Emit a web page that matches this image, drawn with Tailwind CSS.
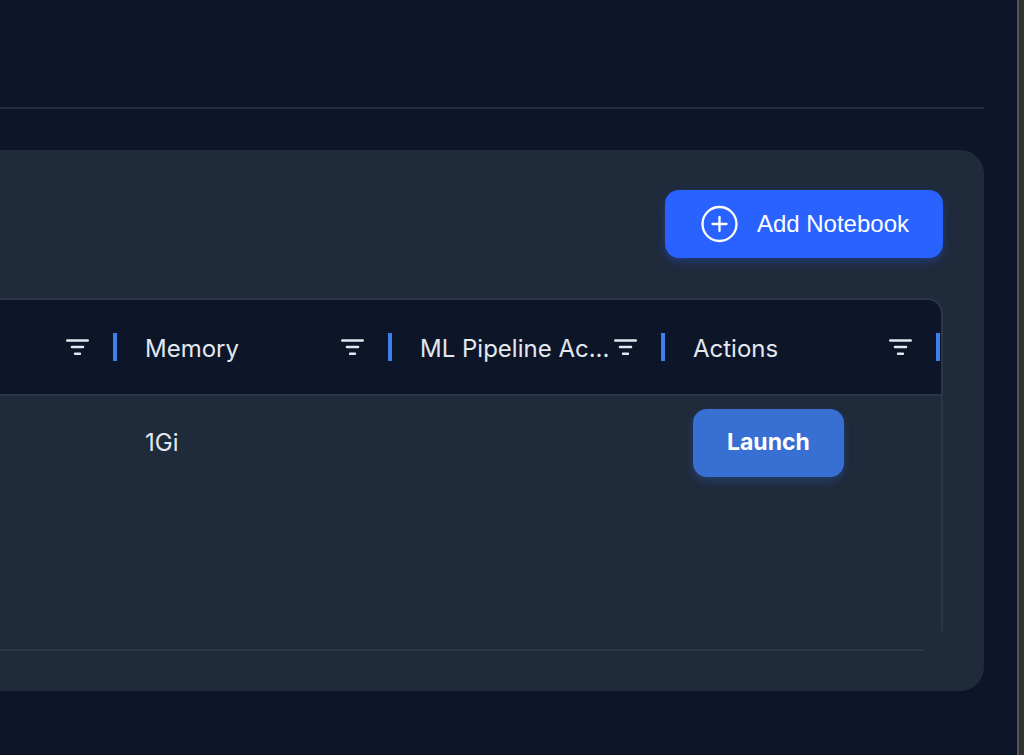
<!DOCTYPE html>
<html lang="en">
<head>
  <meta charset="UTF-8" />
  <meta name="viewport" content="width=device-width, initial-scale=1.0" />
  <title>Notebooks</title>
  <script src="https://cdn.jsdelivr.net/npm/@tailwindcss/browser@4"></script>
</head>
<body class="min-h-screen flex bg-[#333231] font-['Inter',sans-serif] text-[#e2e8f0] overflow-hidden">
  <svg class="hidden">
    <symbol id="filter" viewBox="0 0 24 20">
      <path d="M2.300 3.500h20.400M7 10h11M10.100 16.700h4.800" fill="none" stroke="currentColor" stroke-width="2.6" stroke-linecap="round" />
    </symbol>
  </svg>

  <div class="flex-1 min-w-0 min-h-screen bg-[#0d1628] border-r-2 border-[#55565a] mr-[5px] pr-[33px]">
    <header class="h-[109px] border-b-2 border-[#252f40]"></header>

    <main class="mt-[41px] bg-[#1f2a3b] rounded-r-3xl py-10 pr-[41px]">
      <div class="flex justify-end">
        <button type="button" class="flex items-center gap-[18px] h-[68px] pl-9 pr-[34px] rounded-[14px] bg-[#2962ff] text-white text-2xl font-['Liberation_Sans',sans-serif] shadow-[0_4px_8px_rgba(41,98,255,0.3)]">
          <svg class="size-[38px]" viewBox="0 0 38 38" fill="none" stroke="currentColor" stroke-width="2.3" stroke-linecap="round">
            <circle cx="18.500" cy="19" r="17" />
            <path d="M18.500 12v14M11.500 19h14" />
          </svg>
          Add Notebook
        </button>
      </div>

      <!-- Notebook grid -->
      <div class="relative mt-10">
        <div class="h-[353px] border-2 border-l-0 border-[#2b3648] rounded-tr-2xl overflow-hidden">
          <table class="w-full table-fixed text-2xl">
            <colgroup>
              <col />
              <col class="w-[275px]" />
              <col class="w-[273px]" />
              <col class="w-[276px]" />
            </colgroup>
            <thead class="bg-[#0d1628]">
              <tr class="h-[95px] border-b-2 border-[#2b3648]">
                <th scope="col">
                  <div class="flex items-center justify-end gap-6">
                    <button type="button" aria-label="Filter"><svg class="w-6 h-5"><use href="#filter" /></svg></button>
                    <span class="w-1 h-7 bg-[#4080ea]"></span>
                  </div>
                </th>
                <th scope="col" class="pl-7 font-normal">
                  <div class="flex items-center gap-6">
                    <span class="flex-1 pt-1 text-left">Memory</span>
                    <button type="button" aria-label="Filter Memory"><svg class="w-6 h-5"><use href="#filter" /></svg></button>
                    <span class="w-1 h-7 bg-[#4080ea]"></span>
                  </div>
                </th>
                <th scope="col" class="pl-7 font-normal">
                  <div class="flex items-center gap-6">
                    <span class="flex-1 pt-1 text-left whitespace-nowrap -mr-6">ML Pipeline Ac...</span>
                    <button type="button" aria-label="Filter ML Pipeline"><svg class="w-6 h-5"><use href="#filter" /></svg></button>
                    <span class="w-1 h-7 bg-[#4080ea]"></span>
                  </div>
                </th>
                <th scope="col" class="pl-7 pr-px font-normal">
                  <div class="flex items-center gap-6">
                    <span class="flex-1 pt-1 text-left">Actions</span>
                    <button type="button" aria-label="Filter Actions"><svg class="w-6 h-5"><use href="#filter" /></svg></button>
                    <span class="w-1 h-7 bg-[#4080ea]"></span>
                  </div>
                </th>
              </tr>
            </thead>
            <tbody>
              <tr class="h-[94px]">
                <td></td>
                <td class="pl-7">1Gi</td>
                <td></td>
                <td class="pl-7">
                  <button type="button" class="block h-[68px] px-[34px] rounded-[14px] bg-[#386fd2] text-white text-[23px] font-bold shadow-[0_4px_8px_rgba(56,111,210,0.3)]">Launch</button>
                </td>
              </tr>
            </tbody>
          </table>
        </div>
        <!-- covers the square corner of the frame -->
        <span class="absolute bottom-0 right-0 w-[18px] h-5 bg-[#1f2a3b]"></span>
      </div>
    </main>
  </div>
</body>
</html>
